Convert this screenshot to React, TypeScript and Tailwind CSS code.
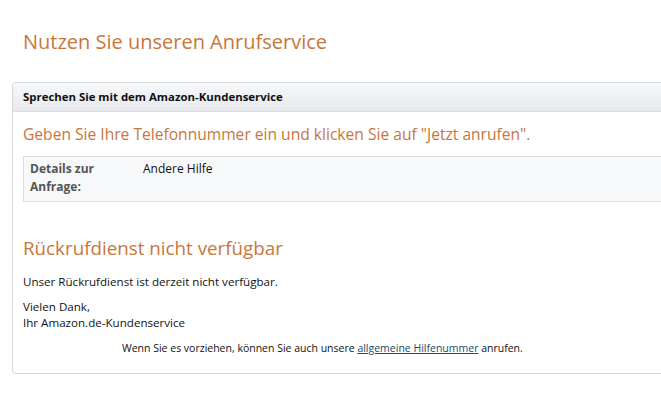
export default function App() {
  const font = { fontFamily: '"Open Sans", "Noto Sans", Arial, sans-serif' };
  return (
    <div className="w-[661px] h-[418px] overflow-hidden bg-white text-[#333]" style={font}>
      <h1 className="pl-[23px] pt-[28px] text-[20px] leading-[28px] text-[#c9763a] font-normal">
        Nutzen Sie unseren Anrufservice
      </h1>
      <div className="ml-[12px] mt-[26px] w-[700px] border border-[#d5d9d9] rounded-[4px] bg-white pb-[17px]">
        <div className="h-[29px] flex items-center pl-[10px] border-b border-[#ddd] bg-gradient-to-b from-[#f7f8fa] to-[#e7e9ec] rounded-t-[4px]">
          <span className="text-[11.4px] font-bold text-[#111]">Sprechen Sie mit dem Amazon-Kundenservice</span>
        </div>
        <div className="pl-[10px]">
          <h2 className="mt-[11px] text-[15.6px] leading-[22px] text-[#c9763a] font-normal">
            Geben Sie Ihre Telefonnummer ein und klicken Sie auf "Jetzt anrufen".
          </h2>
          <div className="mt-[11px] h-[46px] flex border border-[#ddd] bg-[#f7f8fa] pt-[3px]">
            <div className="w-[119px] pl-[6px] text-[12px] leading-[18px] font-bold text-[#555]">
              Details zur
              <br />
              Anfrage:
            </div>
            <div className="text-[12px] leading-[18px] text-[#111]">Andere Hilfe</div>
          </div>
          <h2 className="mt-[33px] text-[18.8px] leading-[26px] text-[#c9763a] font-normal">
            Rückrufdienst nicht verfügbar
          </h2>
          <p className="mt-[13px] text-[11.6px] leading-[16px] text-[#111]">
            Unser Rückrufdienst ist derzeit nicht verfügbar.
          </p>
          <p className="mt-[9px] text-[11.6px] leading-[16px] text-[#111]">
            Vielen Dank,
            <br />
            Ihr Amazon.de-Kundenservice
          </p>
          <p className="mt-[9px] pl-[99px] text-[10.5px] leading-[16px] text-[#111]">
            Wenn Sie es vorziehen, können Sie auch unsere{" "}
            <a className="text-[#1b4a6e] underline">allgemeine Hilfenummer</a> anrufen.
          </p>
        </div>
      </div>
    </div>
  );
}
